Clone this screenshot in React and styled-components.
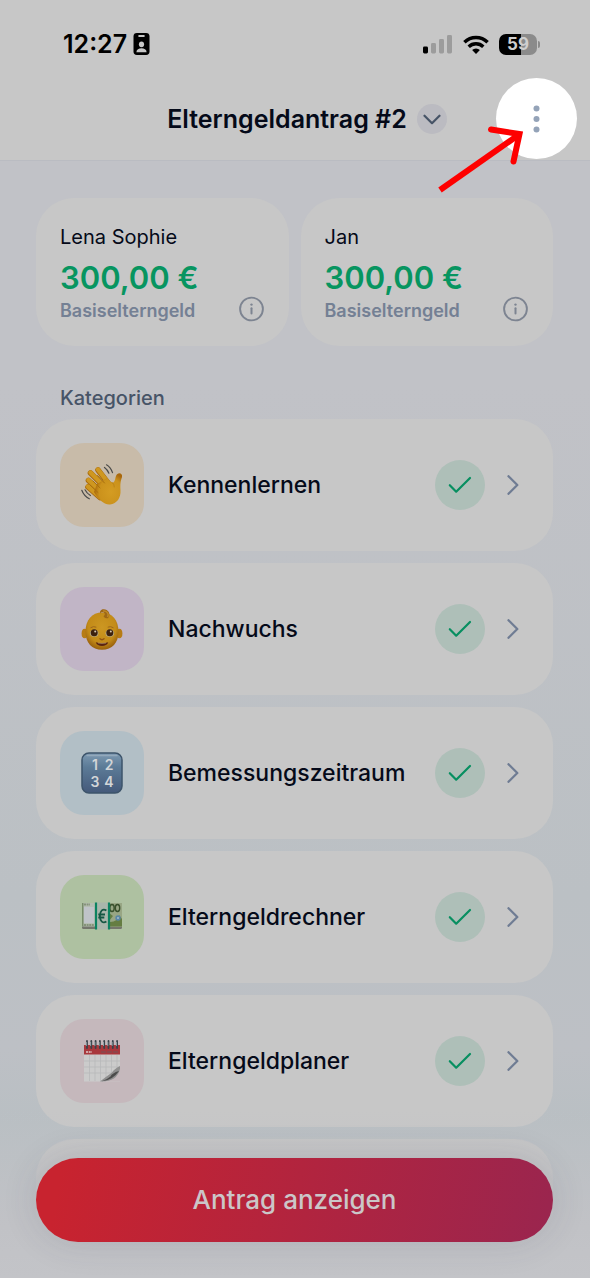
import styled, { createGlobalStyle } from "styled-components";

const GlobalStyle = createGlobalStyle`
  :root {
    --surface: #c7c7c7;
    --ink: #050a19;
    --slate: #475467;
    --muted: #748094;
    --green: #079560;
    --font: Inter, "Liberation Sans", sans-serif;
  }
  * {
    box-sizing: border-box;
  }
  body {
    margin: 0;
    font-family: var(--font);
    color: var(--ink);
    background: #c1c2c7;
  }
  h1, h2, p, ul {
    margin: 0;
    padding: 0;
  }
  button {
    font-family: inherit;
    border: none;
    padding: 0;
    cursor: pointer;
  }
`;

const parents = [
  { name: "Lena Sophie", amount: "300,00 €" },
  { name: "Jan", amount: "300,00 €" },
];

/********** Icons **********/
const BadgeIcon = () => (
  <svg width="17" height="22" viewBox="0 0 17 22" aria-hidden="true">
    <rect x="0.5" width="16" height="22" rx="3.4" fill="#000" />
    <rect x="5.2" y="2" width="6.6" height="1.9" rx="0.9" fill="#c7c7c7" />
    <ellipse cx="8.5" cy="11.3" rx="2.6" ry="2.9" fill="#c7c7c7" />
    <path d="M3.4 19.2c.2-3 2.4-4 5.1-4s4.9 1 5.1 4z" fill="#c7c7c7" />
  </svg>
);

const SignalIcon = () => (
  <svg width="30" height="20" viewBox="0 0 30 20" aria-hidden="true">
    <rect x="0" y="12.5" width="5" height="7" rx="1.4" fill="#000" />
    <rect x="8" y="9" width="5" height="10.5" rx="1.4" fill="#9c9c9c" />
    <rect x="16" y="5" width="5" height="14.5" rx="1.4" fill="#9c9c9c" />
    <rect x="24" y="1" width="5" height="18.5" rx="1.4" fill="#9c9c9c" />
  </svg>
);

const WifiIcon = () => (
  <svg width="26" height="19" viewBox="0 0 26 19" aria-hidden="true">
    <g fill="none" stroke="#000" strokeWidth="3.4">
      <path d="M1.4 7.2a16.5 16.5 0 0 1 23.2 0" />
      <path d="M5.7 11.7a10.4 10.4 0 0 1 14.6 0" />
    </g>
    <path d="M13 19l-3.9-4a5.6 5.6 0 0 1 7.8 0z" fill="#000" />
  </svg>
);

const ChevronDown = () => (
  <svg width="18" height="11" viewBox="0 0 18 11" aria-hidden="true">
    <path d="M1.5 1.7L9 9.2l7.5-7.5" fill="none" stroke="#475467" strokeWidth="2.2" strokeLinecap="round" strokeLinejoin="round" />
  </svg>
);

const ChevronRight = () => (
  <svg width="12" height="20" viewBox="0 0 12 20" aria-hidden="true">
    <path d="M1.5 1.2L10.3 10l-8.8 8.8" fill="none" stroke="#6f7c93" strokeWidth="2.3" strokeLinecap="round" strokeLinejoin="round" />
  </svg>
);

const DotsIcon = () => (
  <svg width="8" height="28" viewBox="0 0 8 28" fill="#94a3b8" aria-hidden="true">
    <circle cx="3.5" cy="3.5" r="3" />
    <circle cx="3.5" cy="14" r="3" />
    <circle cx="3.5" cy="24.5" r="3" />
  </svg>
);

const InfoIcon = () => (
  <svg width="26" height="26" viewBox="0 0 26 26" aria-hidden="true">
    <circle cx="12.5" cy="13" r="11.4" fill="none" stroke="#7d8491" strokeWidth="1.9" />
    <circle cx="12.5" cy="8.6" r="1.2" fill="#7d8491" />
    <path d="M12.5 12.2v5.2" stroke="#7d8491" strokeWidth="2" strokeLinecap="round" />
  </svg>
);

const CheckIcon = () => (
  <svg width="24" height="18" viewBox="0 0 24 18" aria-hidden="true">
    <path d="M1.8 9.2L8.2 15.7 22 2" fill="none" stroke="#078f60" strokeWidth="2.2" strokeLinecap="round" strokeLinejoin="round" />
  </svg>
);

const WaveEmoji = () => (
  <svg width="42" height="42" viewBox="0 0 42 42" aria-hidden="true">
    <defs>
      <radialGradient id="hand" cx="0.6" cy="0.6" r="0.6">
        <stop offset="0" stopColor="#d49c22" />
        <stop offset="0.7" stopColor="#cb921c" />
        <stop offset="1" stopColor="#a9680c" />
      </radialGradient>
    </defs>
    <g stroke="#a8690f" strokeWidth="5.6" strokeLinecap="round" fill="none">
      <path d="M7.500 16L21 29M9.500 8.500L24 23M17 5.500L29 21M7 22.500L19 33" transform="translate(0 .5)" />
    </g>
    <g stroke="#cf971f" strokeWidth="4.4" strokeLinecap="round" fill="none">
      <path d="M7.500 16L21 29M9.500 8.500L24 23M17 5.500L29 21M7 22.500L19 33" />
    </g>
    <path d="M13 28C17 35 23 41 29 40.5C36 39.5 40 34 39.5 26C39.2 20 39.5 17 41 13C42 9 36.5 7.5 35 12C34 15 33.8 18 32 18.5C30 19 28 16 26 14L16 20z" fill="url(#hand)" />
    <g stroke="#a8700e" strokeWidth="1" strokeLinecap="round" fill="none">
      <path d="M12 17l7 6.800M16.500 11.500l7 7.500M9 21l8 7.500" />
      <path d="M31 18.500c2 .5 2 3 2.200 4.500" opacity=".5" />
    </g>
    <g stroke="#4a4a49" strokeWidth="1.2" strokeLinecap="round" fill="none">
      <path d="M25.500.8c2.700 1.600 4.800 4.400 6 7.800M23.500 3.400c2 1.400 3.500 3.400 4.400 5.800" />
      <path d="M.8 26.300c1.400 3.700 4 6.700 7.500 8.500M4 25.800c1.200 2.400 3 4.400 5.400 5.700" />
    </g>
  </svg>
);

const BabyEmoji = () => (
  <svg width="42" height="42" viewBox="0 0 42 42" aria-hidden="true">
    <defs>
      <radialGradient id="face" cx="0.5" cy="0.4" r="0.6">
        <stop offset="0" stopColor="#cc9722" />
        <stop offset="0.7" stopColor="#c38b18" />
        <stop offset="1" stopColor="#99600c" />
      </radialGradient>
    </defs>
    <ellipse cx="3.6" cy="25.5" rx="3" ry="4.800" fill="#b77c15" />
    <ellipse cx="38.4" cy="25.5" rx="3" ry="4.800" fill="#b77c15" />
    <path d="M21 4.500C31 4.500 37.500 12 37.500 23.500C37.500 35 31 41.800 21 41.800S4.500 35 4.500 23.500C4.500 12 11 4.500 21 4.500z" fill="url(#face)" />
    <path d="M27 10.200C31 5 26 .2 21.500 1.300C19.500 2 18.600 4 19 5.500C20.200 3.700 23.200 3.800 23.800 5.800C24 7.700 22.500 8 22.600 8.400C23.500 9.800 25.300 10.400 27 10.200z" fill="#9e6816" />
    <path d="M26.500 9C28.500 5.500 25.500 2.500 22 3" fill="none" stroke="#bd8726" strokeWidth="1.5" />
    <ellipse cx="13.2" cy="25.3" rx="4.2" ry="3.5" fill="#b9b193" />
    <ellipse cx="28.8" cy="25.3" rx="4.2" ry="3.5" fill="#b9b193" />
    <circle cx="13.2" cy="24.8" r="3.5" fill="#3d210e" />
    <circle cx="28.8" cy="24.8" r="3.5" fill="#3d210e" />
    <circle cx="14.2" cy="23.5" r="1" fill="#d4c8b5" />
    <circle cx="29.8" cy="23.5" r="1" fill="#d4c8b5" />
    <path d="M9.500 19.800q3-2 5.800-.6M26.700 19.200q2.800-1.400 5.800.6" fill="none" stroke="#9d661a" strokeWidth="1" />
    <path d="M19 30.800q2 1.700 4 0" fill="none" stroke="#925312" strokeWidth="1.4" strokeLinecap="round" />
    <path d="M14.800 34.200q6.200 1.800 12.400 0c-1.200 5-11.200 5-12.400 0z" fill="#5a2310" />
    <path d="M17 35q4 .9 8 0" stroke="#ab8d69" strokeWidth=".8" fill="none" />
  </svg>
);

const NumbersEmoji = () => (
  <svg width="42" height="42" viewBox="0 0 42 42" aria-hidden="true">
    <defs>
      <linearGradient id="key" x1="0" y1="0" x2="0" y2="1">
        <stop offset="0" stopColor="#7d99b1" />
        <stop offset="0.35" stopColor="#5c7b97" />
        <stop offset="1" stopColor="#44597a" />
      </linearGradient>
    </defs>
    <rect x="1" y="1" width="40" height="40" rx="7" fill="url(#key)" stroke="#3d546b" strokeWidth="1.5" />
    <path d="M6 3.500h30" stroke="#93a9bb" strokeWidth="1.4" strokeLinecap="round" />
    <g fill="#d2d5d8" fontFamily='Inter, "Liberation Sans", sans-serif' fontSize="14" fontWeight="600" textAnchor="middle">
      <text x="14" y="18">1</text>
      <text x="28" y="18">2</text>
      <text x="14" y="35">3</text>
      <text x="28" y="35">4</text>
    </g>
  </svg>
);

const EuroEmoji = () => (
  <svg width="42" height="42" viewBox="0 1 42 42" aria-hidden="true">
    <path d="M1 31h40v1.500q0 1.500-1.500 1.500h-37Q1 34 1 32.500z" fill="#74766c" />
    <rect x="1" y="8" width="40" height="23.500" fill="#b5bdb2" />
    <rect x="1" y="8" width="1.500" height="23.500" fill="#788c6a" />
    <path d="M3 9.500h6M3 30h10" stroke="#859379" strokeWidth="2" strokeDasharray="2 .6" />
    <rect x="3" y="12" width="10" height="16" fill="#bfc3c8" />
    <rect x="28" y="8" width="13" height="23.500" fill="#98a684" />
    <path d="M28 18l4 3-4 5zM29 27q8 0 9-7l3 4v7.500H29z" fill="#657d42" />
    <ellipse cx="31" cy="13" rx="2.2" ry="3.5" fill="none" stroke="#39502c" strokeWidth="1.4" />
    <ellipse cx="36.5" cy="13" rx="2.2" ry="3.5" fill="none" stroke="#39502c" strokeWidth="1.4" />
    <circle cx="37" cy="23" r="2.7" fill="#5987a6" />
    <path d="M36 23h2" stroke="#ccd6dc" />
    <rect x="15" y="7.500" width="13" height="27" fill="#a9b6ac" />
    <path d="M15 7.500v27M28 7.500v27" stroke="#0c8361" strokeWidth="2.2" />
    <path d="M25.400 15.500c-3.500-2.300-6.500.2-6.500 5.500s3 7.800 6.500 5.500M17.300 19.500h6.700M17.300 22.500h6" fill="none" stroke="#155743" strokeWidth="1.8" />
  </svg>
);

const CalendarEmoji = () => (
  <svg width="42" height="42" viewBox="0 0 42 42" aria-hidden="true">
    <rect x="3" y="5" width="36" height="36.5" fill="#cbcbcb" />
    <rect x="3" y="5" width="36" height="9.5" fill="#a8383d" />
    <path d="M5 12h6" stroke="#d0a6a6" strokeWidth="2" strokeDasharray="2 .7" />
    <path d="M20 12h17" stroke="#8e454a" strokeWidth="2" strokeDasharray="5 1" />
    <path d="M8.500 15v26M14 15v26M19.500 15v26M25 15v26M30.500 15v26M36 15v26M3 21h36M3 27h36M3 33h36" stroke="#b8b9ba" strokeWidth=".8" />
    <path d="M39 29Q36 38 22 41.500H39z" fill="#c5b8bc" />
    <path d="M39 26Q33 29 31 32.500Q26 36 19 41.500Q36 42 39 29z" fill="#8f8f8f" />
    <path d="M38 31Q31 33 29.500 36.500Q26 39.500 21 41.300Q32 40 38 31z" fill="#4b4b4b" />
    <path d="M6 1v7M10.300 1v7M14.600 1v7M18.900 1v7M23.200 1v7M27.500 1v7M31.800 1v7M36.100 1v7" stroke="#39434a" strokeWidth="1.8" strokeLinecap="round" />
    <path d="M5.300 2v4M9.600 2v4M13.900 2v4M18.200 2v4M22.500 2v4M26.800 2v4M31.100 2v4M35.400 2v4" stroke="#a3b3b8" strokeWidth=".8" />
  </svg>
);

const categories = [
  { label: "Kennenlernen", tint: "#c8bba9", Icon: WaveEmoji },
  { label: "Nachwuchs", tint: "#c1b5c6", Icon: BabyEmoji },
  { label: "Bemessungszeitraum", tint: "#b2bfc6", Icon: NumbersEmoji },
  { label: "Elterngeldrechner", tint: "#aec1a1", Icon: EuroEmoji },
  { label: "Elterngeldplaner", tint: "#c5b8bc", Icon: CalendarEmoji },
];

const App = () => {
  return (
    <Page>
      <GlobalStyle />
      <Header>
        <StatusBar>
          <Clock>
            12:27
            <BadgeIcon />
          </Clock>
          <StatusIcons>
            <SignalIcon />
            <WifiIcon />
            <Battery>
              <BatteryLevel>59</BatteryLevel>
              <BatteryCap />
            </Battery>
          </StatusIcons>
        </StatusBar>
        <NavBar>
          <TitleGroup>
            <Title>Elterngeldantrag #2</Title>
            <SwitchButton type="button" aria-label="Antrag wechseln">
              <ChevronDown />
            </SwitchButton>
          </TitleGroup>
          <MenuButton type="button" aria-label="Menü">
            <DotsIcon />
          </MenuButton>
        </NavBar>
        <Pointer width="92" height="72" viewBox="0 0 92 72" aria-hidden="true">
          <g fill="none" stroke="#fe0000" strokeWidth="6">
            <path d="M5 67L82 13" />
            <path d="M56 6.500L84.500 11L78.500 38.500" strokeLinecap="round" />
          </g>
        </Pointer>
      </Header>

      <Content>
        <Summary>
          {parents.map((item) => (
            <SummaryCard key={item.name}>
              <Name>{item.name}</Name>
              <Amount>{item.amount}</Amount>
              <BenefitRow>
                Basiselterngeld
                <InfoButton type="button" aria-label={`Info ${item.name}`}>
                  <InfoIcon />
                </InfoButton>
              </BenefitRow>
            </SummaryCard>
          ))}
        </Summary>
        <SectionTitle>Kategorien</SectionTitle>
        <CategoryList>
          {categories.map(({ label, tint, Icon }) => (
            <li key={label}>
              <CategoryCard href="#">
                <IconTile $tint={tint}>
                  <Icon />
                </IconTile>
                <Label>{label}</Label>
                <Done>
                  <CheckIcon />
                </Done>
                <ChevronRight />
              </CategoryCard>
            </li>
          ))}
          <EmptyCard aria-hidden="true" />
        </CategoryList>
      </Content>

      <Footer>
        <SubmitButton type="button">Antrag anzeigen</SubmitButton>
      </Footer>
    </Page>
  );
};

export default App;

const Page = styled.div`
  position: relative;
  display: flex;
  flex-direction: column;
  height: 100vh;
  overflow: hidden;
  background: linear-gradient(180deg, #c1c2c7 0%, #c1c2c7 30%, #bbc0c4 70%, #bdc0c5 82%, #b9bfc3 88%, #babfc4 100%);
`;

/********** Header **********/
const Header = styled.header`
  position: relative;
  flex: none;
  background-color: var(--surface);
  border-bottom: 1px solid #babcc2;
`;

const StatusBar = styled.div`
  display: flex;
  align-items: center;
  justify-content: space-between;
  height: 78px;
  padding: 10px 50px 0 63px;
`;

const Clock = styled.div`
  display: flex;
  align-items: center;
  gap: 6px;
  font-size: 25px;
  font-weight: 600;
  line-height: 30px;
  color: #000;
`;

const StatusIcons = styled.div`
  display: flex;
  align-items: center;
  gap: 10px;
`;

const Battery = styled.div`
  display: flex;
  align-items: center;
  gap: 1px;
`;

const BatteryLevel = styled.span`
  width: 38px;
  height: 21px;
  border-radius: 7px;
  background: linear-gradient(90deg, #000 59%, #8b8b8b 59%);
  color: #cfcfcf;
  font-size: 17px;
  font-weight: 700;
  line-height: 21px;
  text-align: center;
`;

const BatteryCap = styled.span`
  width: 2px;
  height: 7px;
  border-radius: 0 2px 2px 0;
  background-color: #8b8b8b;
`;

const NavBar = styled.div`
  display: grid;
  grid-template-columns: 96px 1fr 81px;
  align-items: start;
  height: 82px;
  padding: 0 13px 0 22px;
`;

const TitleGroup = styled.div`
  grid-column: 2;
  display: flex;
  align-items: center;
  justify-content: center;
  gap: 10px;
  height: 82px;
`;

const Title = styled.h1`
  font-size: 25px;
  font-weight: 600;
  line-height: 30px;
  white-space: nowrap;
`;

const SwitchButton = styled.button`
  display: grid;
  place-items: center;
  flex: none;
  width: 30px;
  height: 30px;
  border-radius: 50%;
  background-color: #bbbbc1;
`;

const MenuButton = styled.button`
  display: grid;
  place-items: center;
  width: 81px;
  height: 81px;
  border-radius: 50%;
  background-color: #fff;
`;

const Pointer = styled.svg`
  position: absolute;
  right: 63px;
  top: 123px;
  z-index: 5;
  pointer-events: none;
`;

/********** Content **********/
const Content = styled.main`
  flex: 1;
  min-height: 0;
  padding: 37px 37px 0 36px;
`;

const Summary = styled.section`
  display: grid;
  grid-template-columns: 1fr 1fr;
  gap: 12px;
`;

const SummaryCard = styled.div`
  padding: 24px 24px 20px;
  border-radius: 38px;
  background-color: var(--surface);
`;

const Name = styled.p`
  font-size: 20px;
  line-height: 30px;
`;

const Amount = styled.p`
  margin-top: 8px;
  font-size: 31px;
  font-weight: 600;
  line-height: 36px;
  color: var(--green);
`;

const BenefitRow = styled.div`
  display: flex;
  align-items: flex-start;
  justify-content: space-between;
  font-size: 18px;
  font-weight: 600;
  line-height: 30px;
  color: var(--muted);
`;

const InfoButton = styled.button`
  display: grid;
  width: 26px;
  height: 26px;
  background: none;
`;

const SectionTitle = styled.h2`
  padding: 38px 24px 7px;
  font-size: 20px;
  font-weight: 500;
  line-height: 28px;
  color: var(--slate);
`;

const CategoryList = styled.ul`
  display: flex;
  flex-direction: column;
  gap: 12px;
  list-style: none;
`;

const CategoryCard = styled.a`
  display: flex;
  align-items: center;
  height: 132px;
  padding: 0 34px 0 24px;
  border-radius: 38px;
  background-color: var(--surface);
  color: var(--ink);
  text-decoration: none;
`;

const EmptyCard = styled.li`
  height: 132px;
  border-radius: 38px;
  background-color: var(--surface);
`;

const IconTile = styled.span`
  display: grid;
  place-items: center;
  flex: none;
  width: 84px;
  height: 84px;
  border-radius: 24px;
  background-color: ${(props) => props.$tint};
`;

const Label = styled.span`
  flex: 1;
  margin-left: 24px;
  font-size: 23px;
  font-weight: 500;
  line-height: 30px;
`;

const Done = styled.span`
  display: grid;
  place-items: center;
  flex: none;
  width: 50px;
  height: 50px;
  margin-right: 22px;
  border-radius: 50%;
  background-color: #aebfb8;
`;

/********** Footer **********/
const Footer = styled.footer`
  position: absolute;
  left: 0;
  right: 0;
  bottom: 0;
  padding: 48px 37px 36px 36px;
  background: linear-gradient(180deg, rgba(195, 196, 200, 0) 0%, #c1c2c6 70%, #c3c4c8 100%);
`;

const SubmitButton = styled.button`
  display: block;
  width: 100%;
  height: 84px;
  border-radius: 42px;
  background: linear-gradient(100deg, #c8232f 5%, #9b254e 98%);
  box-shadow: 0 0 36px rgba(60, 60, 75, 0.14);
  color: #cbc6c8;
  font-size: 26px;
  font-weight: 500;
  line-height: 32px;
`;
